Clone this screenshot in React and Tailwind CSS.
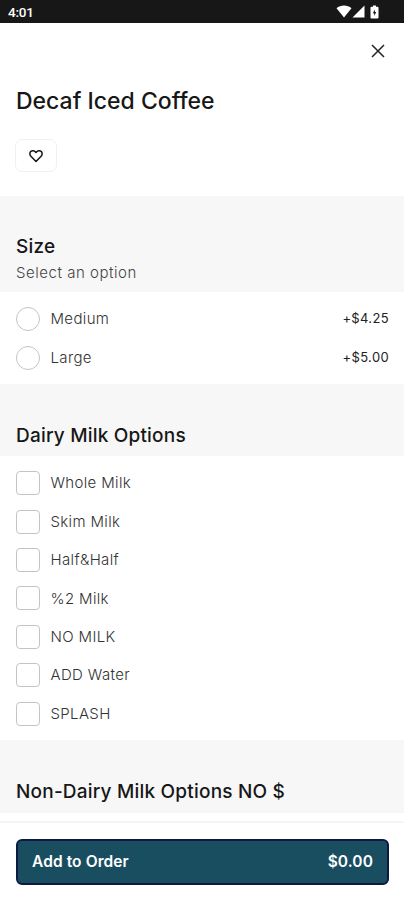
const sizes = [
  { name: "Medium", price: "+$4.25" },
  { name: "Large", price: "+$5.00" },
];

const dairyOptions = [
  "Whole Milk",
  "Skim Milk",
  "Half&Half",
  "%2 Milk",
  "NO MILK",
  "ADD Water",
  "SPLASH",
];

function StatusBar() {
  return (
    <div className="flex h-[23px] shrink-0 items-center justify-between bg-[#171717] pl-2 pr-[25px] text-white">
      <span className="pt-[3px] font-['Roboto',sans-serif] text-[13.5px] font-medium leading-none tracking-[-0.2px]">
        4:01
      </span>
      <div className="flex items-center">
        <svg className="h-[13px] w-[16px]" viewBox="0 0 16 13" fill="currentColor">
          <path d="M0.5 3.2C4.6-0.3 11.4-0.3 15.5 3.2L8 12.5z" />
        </svg>
        <svg className="h-[13px] w-[13px]" viewBox="0 0 13 13" fill="currentColor">
          <path d="M12.5 0.5v12H0.5z" />
        </svg>
        <svg className="ml-[5px] h-[14px] w-[9px]" viewBox="0 0 9 14">
          <path
            d="M3 0.5h3v1.3h1.5a1 1 0 0 1 1 1V12.500a1 1 0 0 1-1 1h-6a1 1 0 0 1-1-1V2.800a1 1 0 0 1 1-1H3z"
            fill="currentColor"
          />
          <path d="M4.900 4.500L2.800 8.200h1.400v2.700l2.100-3.800H4.900z" fill="#171717" />
        </svg>
      </div>
    </div>
  );
}

function SectionTitle({ children }) {
  return (
    <h2 className="text-[19px] font-medium leading-[27px] tracking-[0.2px]">
      {children}
    </h2>
  );
}

function OptionRow({ name, price, type }) {
  return (
    <label className="flex h-[38.4px] items-center">
      <span
        className={
          type === "radio"
            ? "h-6 w-6 shrink-0 rounded-full border border-[#c4c4c4] bg-white"
            : "h-6 w-6 shrink-0 rounded-[4px] border border-[#c4c4c4] bg-white"
        }
      />
      <span className="ml-[11px] flex-1 pt-px text-[15px] font-light tracking-[0.35px] text-[#333]">
        {name}
      </span>
      {price && (
        <span className="text-[13px] tracking-[0.35px] text-[#222]">{price}</span>
      )}
    </label>
  );
}

export default function App() {
  return (
    <div className="flex h-[900px] w-[404px] flex-col overflow-hidden bg-white font-['Inter',sans-serif] text-[#171717]">
      <StatusBar />

      {/* Item header */}
      <header className="h-[173px] shrink-0 px-4">
        <div className="flex h-[55px] items-center justify-end pr-[3px]">
          <button aria-label="Close">
            <svg
              className="h-[14px] w-[14px]"
              viewBox="0 0 14 14"
              fill="none"
              stroke="#222"
              strokeWidth="1.5"
            >
              <path d="M1 1l12 12M13 1L1 13" />
            </svg>
          </button>
        </div>
        <h1 className="mt-[7px] text-[23px] font-medium leading-8 text-[#171717]">
          Decaf Iced Coffee
        </h1>
        <button
          aria-label="Favorite"
          className="-ml-px mt-[22px] flex h-[33px] w-[42px] items-center justify-center rounded-[7px] border border-[#f0f0f0]"
        >
          <svg
            className="h-4 w-4"
            viewBox="0 0 16 16"
            fill="none"
            stroke="#171717"
            strokeWidth="1.5"
            strokeLinejoin="round"
          >
            <path d="M8 13.500L2.900 8.300C1.500 6.800 1.500 4.600 2.900 3.400C4.300 2.200 6.600 2.500 8 4.500C9.400 2.500 11.700 2.200 13.100 3.400C14.500 4.600 14.500 6.800 13.100 8.300z" />
          </svg>
        </button>
      </header>

      {/* Size */}
      <div className="h-24 shrink-0 bg-[#f7f7f7] px-4 pt-[37px]">
        <SectionTitle>Size</SectionTitle>
        <p className="text-[15px] font-light leading-[25px] tracking-[0.53px] text-[#444]">
          Select an option
        </p>
      </div>
      <div className="h-[92px] shrink-0 pl-[15.500px] pr-[15px] pt-[8px]">
        {sizes.map((size) => (
          <OptionRow key={size.name} type="radio" name={size.name} price={size.price} />
        ))}
      </div>

      {/* Dairy milk */}
      <div className="h-[72px] shrink-0 bg-[#f7f7f7] px-4 pt-[38px]">
        <SectionTitle>Dairy Milk Options</SectionTitle>
      </div>
      <div className="h-[284px] shrink-0 pl-[15.500px] pr-4 pt-[8px]">
        {dairyOptions.map((name) => (
          <OptionRow key={name} type="checkbox" name={name} />
        ))}
      </div>

      {/* Non-dairy milk */}
      <div className="h-[73px] shrink-0 bg-[#f7f7f7] px-4 pt-[38px]">
        <SectionTitle>Non-Dairy Milk Options NO $</SectionTitle>
      </div>

      {/* Order bar */}
      <footer className="mt-[8px] flex-1 border-t-2 border-[#f5f5f5] pl-4 pr-[15px] pt-4">
        <button className="flex h-[46px] w-full items-center justify-between rounded-[6px] border-2 border-[#0c1a45] bg-[#184e60] px-[14px] text-[15.5px] font-semibold tracking-[0.1px] text-white">
          <span>Add to Order</span>
          <span>$0.00</span>
        </button>
      </footer>
    </div>
  );
}
